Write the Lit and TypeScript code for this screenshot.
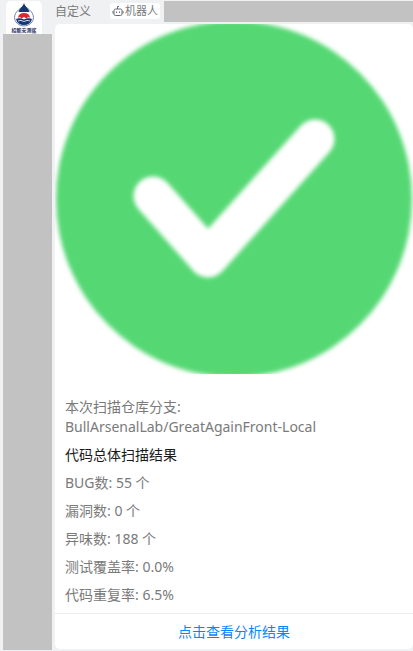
import { LitElement, html, css } from "lit";
import { customElement } from "lit/decorators.js";

const sans = css`"Noto Sans", "Noto Sans CJK SC", sans-serif`;

@customElement("bot-avatar")
class BotAvatar extends LitElement {
  static styles = css`
    :host { display: block; width: 36px; height: 33px; background: #fff; border-radius: 5px 5px 0 0; overflow: hidden; }
    svg { display: block; }
    .name { font: 700 5px ${sans}; fill: #1d2b5c; }
  `;
  render() {
    return html`<svg width="36" height="33" viewBox="0 0 36 33" role="img" aria-label="头像">
      <path d="M18 4 C16 7 8.500 10 8.500 16.500 A9.500 8.500 0 0 0 27.500 16.500 C27.500 10 20 7 18 4Z" fill="#fff" stroke="#6f84ad" stroke-width="1"/>
      <path d="M18 2 C17 6 13.500 7 12.500 11 H23.500 C22.500 7 19 6 18 2Z" fill="#17356e"/>
      <path d="M12 17 Q12.500 12 18 12 Q23.500 12 24 17 L22 16 L20.500 17.500 L18 16 L15.500 17.500 L14 16Z" fill="#d52b31"/>
      <path d="M10 18 Q14 16.500 18 18.500 Q22 16.500 26 18 Q24.500 24 18 24 Q11.500 24 10 18Z" fill="#17356e"/>
      <path d="M12 20 Q15 18.500 18 20.500 Q21 18.500 24 20" fill="none" stroke="#fff" stroke-width="0.8"/>
      <text class="name" x="18" y="31" text-anchor="middle">招能安测鲨</text>
    </svg>`;
  }
}

@customElement("app-root")
class AppRoot extends LitElement {
  static styles = css`
    :host { display: grid; grid-template-columns: 49px minmax(0, 1fr); column-gap: 3px; min-height: 100vh; box-sizing: border-box; padding: 1px 0 1px 3px; background: #f0f1f3; font: 14px/20px ${sans}; color: #7a7a7a; }
    * { box-sizing: border-box; }
    .side { display: flex; flex-direction: column; }
    bot-avatar { margin-left: 3px; }
    .rail { flex: 1; background: #c2c2c2; }
    .main { display: flex; flex-direction: column; padding-bottom: 1px; }
    .head { display: flex; height: 23px; padding-bottom: 2px; }
    .sender { width: 55px; font-size: 12px; line-height: 21px; }
    .tag { display: flex; align-items: center; gap: 1px; width: 50px; height: 16px; margin: 2px 4px 0 0; padding-left: 2px; border-radius: 3px; background: #fff; font-size: 11px; line-height: 16px; white-space: nowrap; }
    .bar { flex: 1; background: #c2c2c2; }
    .card { flex: 1; display: flex; flex-direction: column; background: #fff; border-radius: 5px; overflow: hidden; }
    .status { display: block; width: 100%; height: auto; }
    .body { padding: 23px 10px 8px; }
    p { margin: 0 0 8px; overflow-wrap: anywhere; }
    p:last-child { margin: 0; }
    .title { color: #1a1a1a; }
    .action { display: block; margin-top: auto; border-top: 1px solid #ededee; padding: 8px 8px 7px; text-align: center; color: #0a84ff; text-decoration: none; }
  `;

  private stats = [
    ["BUG数", "55 个"],
    ["漏洞数", "0 个"],
    ["异味数", "188 个"],
    ["测试覆盖率", "0.0%"],
    ["代码重复率", "6.5%"],
  ];

  render() {
    return html`
      <aside class="side"><bot-avatar></bot-avatar><div class="rail"></div></aside>
      <main class="main">
        <header class="head">
          <span class="sender">自定义</span>
          <span class="tag">
            <svg width="12" height="12" viewBox="0 0 12 12" fill="none" stroke="#646a73" aria-hidden="true">
              <rect x="2" y="4" width="8" height="6.500" rx="1.500"/>
              <path d="M5.500 4V1.500H7M1 6V8.500M11 6V8.500M4.500 6.500V8M7.500 6.500V8"/>
            </svg>机器人</span>
          <div class="bar"></div>
        </header>
        <article class="card">
          <svg class="status" viewBox="0 0 358 350" role="img" aria-label="通过">
            <defs><filter id="soft" filterUnits="userSpaceOnUse" x="-20" y="-20" width="398" height="390"><feGaussianBlur stdDeviation="2"/></filter></defs>
            <circle cx="179" cy="175" r="178" fill="#55d873" filter="url(#soft)"/>
            <path d="M98 172 L153 234 L260 115" fill="none" stroke="#fff" stroke-width="39" stroke-linecap="round" stroke-linejoin="round" filter="url(#soft)"/>
          </svg>
          <section class="body">
            <p>本次扫描仓库分支:<br>BullArsenalLab/GreatAgainFront-Local</p>
            <p class="title">代码总体扫描结果</p>
            ${this.stats.map(([k, v]) => html`<p>${k}: ${v}</p>`)}
          </section>
          <a class="action" href="#result">点击查看分析结果</a>
        </article>
      </main>`;
  }
}
